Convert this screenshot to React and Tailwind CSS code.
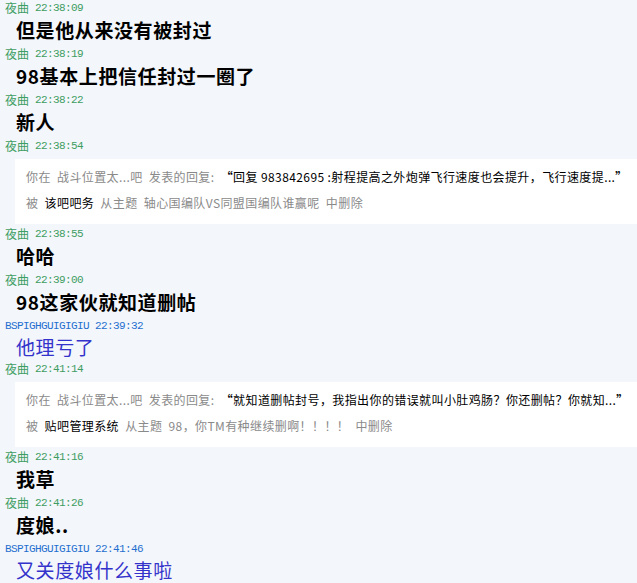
import React from 'react';

const cjk = "font-['Noto_Sans_CJK_SC',sans-serif]";
const mono = "font-['Liberation_Mono','Noto_Sans_CJK_SC',monospace]";

const feed = [
  { type: 'msg', user: '夜曲', time: '22:38:09', text: '但是他从来没有被封过' },
  { type: 'msg', user: '夜曲', time: '22:38:19', text: '98基本上把信任封过一圈了' },
  { type: 'msg', user: '夜曲', time: '22:38:22', text: '新人' },
  {
    type: 'del', user: '夜曲', time: '22:38:54',
    quote: '回复 983842695 :射程提高之外炮弹飞行速度也会提升，飞行速度提...',
    by: '该吧吧务', topic: '轴心国编队VS同盟国编队谁赢呢',
  },
  { type: 'msg', user: '夜曲', time: '22:38:55', text: '哈哈' },
  { type: 'msg', user: '夜曲', time: '22:39:00', text: '98这家伙就知道删帖' },
  { type: 'msg', user: 'BSPIGHGUIGIGIU', time: '22:39:32', text: '他理亏了', other: true },
  {
    type: 'del', user: '夜曲', time: '22:41:14',
    quote: '就知道删帖封号，我指出你的错误就叫小肚鸡肠？你还删帖？你就知...',
    by: '贴吧管理系统', topic: '98，你TM有种继续删啊！！！！',
  },
  { type: 'msg', user: '夜曲', time: '22:41:16', text: '我草' },
  { type: 'msg', user: '夜曲', time: '22:41:26', text: '度娘..' },
  { type: 'msg', user: 'BSPIGHGUIGIGIU', time: '22:41:46', text: '又关度娘什么事啦', other: true },
];

function Header({ user, time, other }) {
  const color = other ? 'text-[#1f6fd0]' : 'text-[#3d9d62]';
  return (
    <div className={`h-[16px] pl-[5px] flex items-center gap-[6px] leading-none ${color}`}>
      <span className={other ? `${mono} text-[11px] tracking-[-0.6px]` : `${cjk} text-[12px]`}>{user}</span>
      <span className={`${mono} text-[11px] tracking-[-0.6px]`}>{time}</span>
    </div>
  );
}

export default function App() {
  return (
    <div className={`w-[637px] min-h-[583px] bg-[#f3f6fa] ${cjk}`}>
      {feed.map((item, i) => (
        <div key={i}>
          <Header user={item.user} time={item.time} other={item.other} />
          {item.type === 'msg' ? (
            <div
              className={
                item.other
                  ? 'h-[27px] pl-[16px] text-[19px] leading-[25px] tracking-[0.6px] text-[#3333cc]'
                  : 'h-[30px] pl-[16px] text-[19px] leading-[28px] tracking-[0.6px] font-bold text-black'
              }
            >
              {item.text}
            </div>
          ) : (
            <div className="mt-[5px] mb-[2px] ml-[15px] bg-white pl-[11px] pt-[5px] pb-[8px] text-[12px] leading-[26px] tracking-[0.4px] text-[#8a8a8a] whitespace-nowrap">
              <div>
                你在&nbsp;&nbsp;战斗位置太...吧&nbsp;&nbsp;发表的回复:&nbsp;&nbsp;
                <span className="text-black"><b>“</b>{item.quote}<b>”</b></span>
              </div>
              <div>
                被&nbsp;&nbsp;<span className="text-black">{item.by}</span>&nbsp;&nbsp;从主题&nbsp;&nbsp;{item.topic}&nbsp;&nbsp;中删除
              </div>
            </div>
          )}
        </div>
      ))}
    </div>
  );
}
